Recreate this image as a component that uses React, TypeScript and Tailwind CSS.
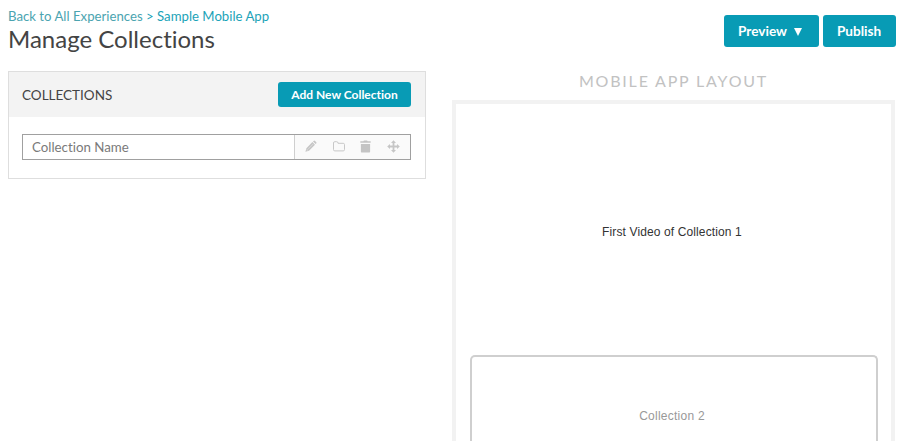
import React from "react";

function PencilIcon() {
  return (
    <svg width="12" height="12" viewBox="0 0 12 12" fill="#c6c6c6">
      <path d="M8.600.9a1 1 0 0 1 1.400 0l1.200 1.200a1 1 0 0 1 0 1.400l-.6.6L8 1.500zM7.400 2.100l2.600 2.600-6 6.100L.4 11.800l1-3.600z" />
      <path d="M3.300 8.900 8.200 4" stroke="#eee" strokeWidth=".5" />
      <path d="M1.900 8.900l1.300 1.300-1 .3-.6-.6z" fill="#e4e4e4" />
    </svg>
  );
}

function FolderIcon() {
  return (
    <svg width="12" height="11" viewBox="0 0 12 11" fill="none" stroke="#c8c8c8" strokeWidth="1">
      <path d="M.5 2A1.300 1.300 0 0 1 1.800.7h1.900A1.300 1.300 0 0 1 5 2v.3h5.200a1.300 1.300 0 0 1 1.300 1.300v5a1.300 1.300 0 0 1-1.300 1.300H1.800A1.300 1.300 0 0 1 .5 8.600z" />
    </svg>
  );
}

function TrashIcon() {
  return (
    <svg width="11" height="13" viewBox="0 0 11 13" fill="#c4c4c4">
      <path d="M.3 1.300h3L4 .4h3l.7.9h3v1.500H.3zM.9 4h9.200v7.700a.7.7 0 0 1-.7.7H1.600a.7.7 0 0 1-.7-.7z" />
    </svg>
  );
}

function MoveIcon() {
  return (
    <svg width="13" height="13" viewBox="0 0 13 13" fill="#c6c6c6">
      <path d="M6.500.2 9 3H7.400v2.600H10V4l2.800 2.500L10 9V7.400H7.400V10H9l-2.500 2.800L4 10h1.600V7.400H3V9L.2 6.500 3 4v1.600h2.600V3H4z" />
    </svg>
  );
}

export default function App() {
  return (
    <div className="flex h-[441px] w-[900px] flex-col overflow-hidden bg-white font-[Lato,sans-serif] text-[#444] [font-variant-ligatures:none]">
      <header className="flex h-[71px] shrink-0 items-start justify-between pl-2 pr-1">
        <div className="pt-[7px]">
          <nav className="h-[17px] whitespace-nowrap text-[13.2px] leading-[18px] text-[#1ba3b8]">
            <a className="text-[#4ba4b0]">Back to All Experiences</a>
            <span> &gt; </span>
            <a>Sample Mobile App</a>
          </nav>
          <h1 className="whitespace-nowrap text-[24px] leading-[29px]">Manage Collections</h1>
        </div>
        <div className="flex gap-1 pt-[15px] text-[13.6px] font-bold text-white">
          <button className="flex h-8 w-[95px] items-center justify-center gap-[7px] rounded-[3px] bg-[#089bb5] pr-[3px] pt-px">
            <span>Preview</span>
            <svg width="8" height="8" viewBox="0 0 8 8" fill="white">
              <path d="M0 0h8L4 8z" />
            </svg>
          </button>
          <button className="h-8 w-[73px] rounded-[3px] bg-[#089bb5] pr-px pt-px">Publish</button>
        </div>
      </header>
      <main className="flex min-h-0 flex-1 gap-[26px] pl-2">
        <section className="h-[108px] w-[418px] shrink-0 border border-[#dedede]">
          <div className="flex h-[45px] items-center justify-between bg-[#f3f3f3] pl-[13px] pr-[14px]">
            <h2 className="pt-[2px] text-[13.5px]">COLLECTIONS</h2>
            <button className="h-[25px] w-[133px] rounded-[3px] bg-[#089bb5] text-[12px] font-bold text-white">
              Add New Collection
            </button>
          </div>
          <div className="pl-[13px] pr-[14px] pt-[17px]">
            <div className="flex h-[26px] border border-[#a0a0a0]">
              <div className="flex flex-1 items-center pl-[9px] pt-px text-[13.3px] text-[#7a7a7a]">
                Collection Name
              </div>
              <div className="flex w-[116px] items-center gap-[15.6px] border-l border-[#cfcfcf] bg-[#fafafa] pb-[2px] pl-[10px]">
                <PencilIcon />
                <FolderIcon />
                <TrashIcon />
                <MoveIcon />
              </div>
            </div>
          </div>
        </section>
        <section className="flex w-[443px] shrink-0 flex-col">
          <h2 className="h-[29px] text-center text-[16px] leading-5 tracking-[1.8px] text-[#c2c2c2]">
            MOBILE APP LAYOUT
          </h2>
          <div className="flex flex-1 flex-col border-4 border-b-0 border-[#f2f2f2] font-['Liberation_Sans',Arial,sans-serif] text-[12px] tracking-[0.12px]">
            <div className="flex h-[251px] items-center justify-center pr-[3px] pt-[5px] text-[#333]">
              First Video of Collection 1
            </div>
            <div className="ml-[14px] flex w-[408px] flex-1 justify-center rounded-t-[5px] border-2 border-b-0 border-[#cfcfcf] pr-[4px] pt-[50px] tracking-[0.25px] text-[#999]">
              Collection 2
            </div>
          </div>
        </section>
      </main>
    </div>
  );
}
